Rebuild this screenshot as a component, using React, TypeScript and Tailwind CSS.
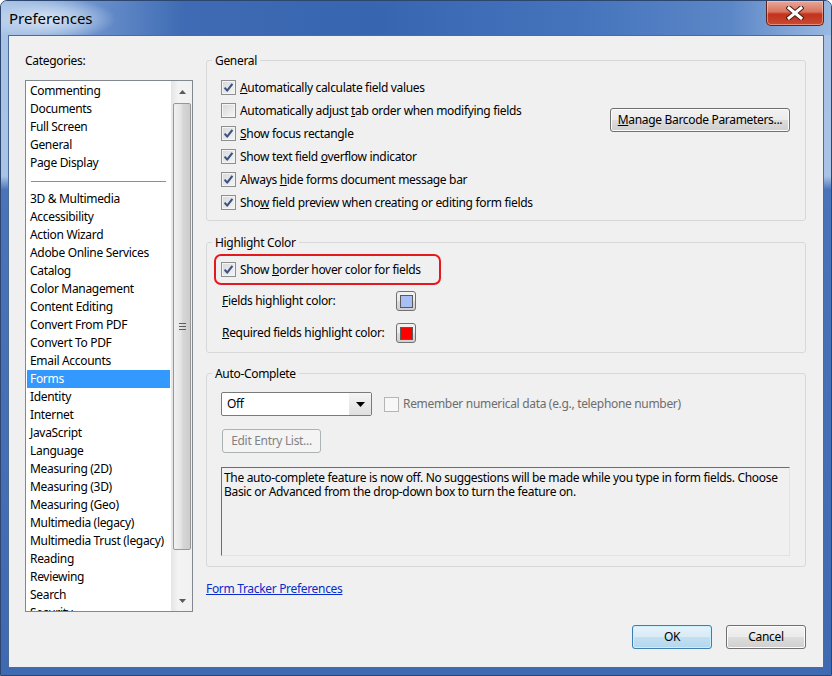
import React from "react";

const topCategories = ["Commenting", "Documents", "Full Screen", "General", "Page Display"];
const moreCategories = [
  "3D & Multimedia",
  "Accessibility",
  "Action Wizard",
  "Adobe Online Services",
  "Catalog",
  "Color Management",
  "Content Editing",
  "Convert From PDF",
  "Convert To PDF",
  "Email Accounts",
  "Forms",
  "Identity",
  "Internet",
  "JavaScript",
  "Language",
  "Measuring (2D)",
  "Measuring (3D)",
  "Measuring (Geo)",
  "Multimedia (legacy)",
  "Multimedia Trust (legacy)",
  "Reading",
  "Reviewing",
  "Search",
  "Security",
];

function Check({ checked, disabled }: { checked?: boolean; disabled?: boolean }) {
  return (
    <span
      className={
        disabled
          ? "flex h-[15px] w-[15px] shrink-0 items-center justify-center border border-[#b5b5b5] bg-[#f7f7f7]"
          : "flex h-[15px] w-[15px] shrink-0 items-center justify-center border border-[#8e8f8f] bg-[linear-gradient(135deg,#d6d7d9,#f6f6f6)] shadow-[inset_0_0_0_1px_#f4f4f4]"
      }
    >
      {checked && (
        <svg width="11" height="11" viewBox="0 0 11 11">
          <path d="M1.6 5.6 L4.2 8.6 L9.4 1.8" fill="none" stroke="#3b5283" strokeWidth="2.1" strokeLinejoin="round" />
        </svg>
      )}
    </span>
  );
}

function CheckRow({ checked, children }: { checked?: boolean; children: React.ReactNode }) {
  return (
    <div className="flex h-[23px] items-center gap-[4px]">
      <Check checked={checked} />
      <span className="whitespace-nowrap">{children}</span>
    </div>
  );
}

function Button({
  children,
  focused,
  disabled,
  className,
}: {
  children: React.ReactNode;
  focused?: boolean;
  disabled?: boolean;
  className?: string;
}) {
  const look = disabled
    ? "border-[#adb2b5] bg-[#f4f4f4] text-[#838383]"
    : focused
      ? "border-[#3c7fb1] bg-[linear-gradient(#e6f2fa_0%,#d8ebf7_50%,#c4e0f2_50%,#b3d6ee_100%)] shadow-[inset_0_0_0_1px_#c9f0fd]"
      : "border-[#707070] bg-[linear-gradient(#f2f2f2_0%,#ebebeb_50%,#dddddd_50%,#cfcfcf_100%)] shadow-[inset_0_0_0_1px_#fbfbfb]";
  return (
    <div className={`flex h-[24px] items-center justify-center rounded-[3px] border ${look} ${className ?? ""}`}>
      {children}
    </div>
  );
}

function Swatch({ color }: { color: string }) {
  return (
    <div className="flex h-[20px] w-[20px] items-center justify-center rounded-[3px] border border-[#707070] bg-[linear-gradient(#f2f2f2_0%,#ebebeb_50%,#dddddd_50%,#cfcfcf_100%)]">
      <div className="h-[13px] w-[13px] border border-[#5a5a5a]" style={{ backgroundColor: color }} />
    </div>
  );
}

function Group({ title, className, children }: { title: string; className?: string; children: React.ReactNode }) {
  return (
    <fieldset className={`w-[600px] rounded-[3px] border border-[#d8d8d8] ${className ?? ""}`}>
      <legend className="ml-[5px] px-[3px] leading-[15px]">{title}</legend>
      {children}
    </fieldset>
  );
}

function CategoryList() {
  return (
    <div className="mt-[11px] flex h-[532px] border border-[#828790] bg-white">
      <div className="w-[145px] overflow-hidden px-[1px] pt-[1px]">
        {topCategories.map((c) => (
          <div key={c} className="flex h-[18px] items-center whitespace-nowrap pl-[3px]">
            {c}
          </div>
        ))}
        <div className="flex h-[18px] items-center pl-[4px] pr-[3px]">
          <div className="h-px w-[135px] bg-[#4ea1d3]" />
        </div>
        {moreCategories.map((c) => (
          <div
            key={c}
            className={
              c === "Forms"
                ? "flex h-[18px] items-center whitespace-nowrap bg-[#3399ff] pl-[3px] text-white"
                : "flex h-[18px] items-center whitespace-nowrap pl-[3px]"
            }
          >
            {c}
          </div>
        ))}
      </div>
      {/* vertical scrollbar */}
      <div className="flex w-[21px] flex-col border-l border-[#e6e6e6] bg-[linear-gradient(90deg,#e6e6e6,#f3f3f3_30%,#f1f1f1)]">
        <div className="flex h-[21px] items-center justify-center">
          <svg width="7" height="4" viewBox="0 0 7 4">
            <path d="M0 4 L3.5 0 L7 4 Z" fill="#5a5a5a" />
          </svg>
        </div>
        <div className="flex-1 px-[1px] pt-[1px]">
          <div className="flex h-[447px] items-center justify-center rounded-[2px] border border-[#979797] bg-[linear-gradient(90deg,#f1f1f1,#e4e4e4_45%,#d6d6d6_55%,#cdcdcd)]">
            <div className="flex flex-col gap-[2px]">
              <div className="h-px w-[7px] bg-[#5e5e5e]" />
              <div className="h-px w-[7px] bg-[#5e5e5e]" />
              <div className="h-px w-[7px] bg-[#5e5e5e]" />
            </div>
          </div>
        </div>
        <div className="flex h-[21px] items-center justify-center">
          <svg width="7" height="4" viewBox="0 0 7 4">
            <path d="M0 0 L3.5 4 L7 0 Z" fill="#5a5a5a" />
          </svg>
        </div>
      </div>
    </div>
  );
}

export default function App() {
  return (
    <div className="h-[676px] w-[832px] overflow-hidden rounded-t-[7px] border border-[#2c4670] bg-[linear-gradient(180deg,#a8c2e6_0%,#a9c3e6_26%,#4a74b9_28%,#3f6ab2_100%)] font-['Noto_Sans',sans-serif] text-[12px] tracking-[-0.32px] text-black">
      {/* title bar */}
      <div className="flex h-[34px] items-start justify-between bg-[radial-gradient(ellipse_70px_22px_at_45px_18px,#dbe6f4_0%,rgba(200,218,240,0.6)_55%,rgba(200,218,240,0)_100%),linear-gradient(90deg,#a9c3e6_0%,#6f95cf_10%,#3e6bb3_22%,#3865b0_45%,#4574bd_70%,#5c87c7_88%,#9ab9e1_100%)]">
        <div className="pl-[8px] pt-[7px] text-[15px] leading-[20px] tracking-normal">Preferences</div>
        <div className="mr-[7px] flex h-[25px] w-[58px] items-center justify-center rounded-b-[5px] border border-t-0 border-[#5b231b] bg-[linear-gradient(#e7a899_0%,#d8745f_45%,#c2321c_55%,#c94a33_100%)] shadow-[inset_0_0_0_1px_rgba(255,210,200,0.5)]">
          <svg width="18" height="14" viewBox="0 0 18 14">
            <path d="M3 2 L15 12 M15 2 L3 12" stroke="#4a1a12" strokeWidth="5" strokeLinecap="square" />
            <path d="M3 2 L15 12 M15 2 L3 12" stroke="#ffffff" strokeWidth="3" strokeLinecap="square" />
          </svg>
        </div>
      </div>

      {/* client area */}
      <div className="ml-[7px] flex h-[633px] w-[816px] flex-col border border-[#4d6b99] bg-[#f0f0f0]">
        <div className="flex gap-[13px] pl-[16px] pt-[17px]">
          <div className="w-[168px]">
            <div className="leading-[16px]">Categories:</div>
            <CategoryList />
          </div>

          <div className="w-[600px]">
            <Group title="General">
              <div className="flex justify-between pb-[6px] pl-[14px] pr-[15px] pt-[8px]">
                <div>
                  <CheckRow checked>
                    <u>A</u>utomatically calculate field values
                  </CheckRow>
                  <CheckRow>
                    Automatically adjust <u>t</u>ab order when modifying fields
                  </CheckRow>
                  <CheckRow checked>
                    <u>S</u>how focus rectangle
                  </CheckRow>
                  <CheckRow checked>
                    Show text field <u>o</u>verflow indicator
                  </CheckRow>
                  <CheckRow checked>
                    Always <u>h</u>ide forms document message bar
                  </CheckRow>
                  <CheckRow checked>
                    Sho<u>w</u> field preview when creating or editing form fields
                  </CheckRow>
                </div>
                <div className="pt-[32px]">
                  <Button className="w-[180px]">
                    <span>
                      <u>M</u>anage Barcode Parameters...
                    </span>
                  </Button>
                </div>
              </div>
            </Group>

            <Group title="Highlight Color" className="mt-[14px]">
              <div className="pb-[9px] pl-[14px] pt-[4px]">
                <div className="-ml-[7px] flex h-[31px] w-[227px] items-center gap-[4px] rounded-[7px] border-2 border-[#e3191e] pl-[5px]">
                  <Check checked />
                  <span>
                    Show <u>b</u>order hover color for fields
                  </span>
                </div>
                <div className="mt-[6px] flex h-[20px] items-center">
                  <span className="ml-[1px] w-[174px]">
                    <u>F</u>ields highlight color:
                  </span>
                  <Swatch color="#a8bff6" />
                </div>
                <div className="mt-[12px] flex h-[20px] items-center">
                  <span className="ml-[1px] w-[174px]">
                    <u>R</u>equired fields highlight color:
                  </span>
                  <Swatch color="#ff0000" />
                </div>
              </div>
            </Group>

            <Group title="Auto-Complete" className="mt-[13px]">
              <div className="pb-[10px] pl-[14px] pt-[11px]">
                <div className="flex items-center">
                  <div className="flex h-[24px] w-[151px] items-stretch rounded-[2px] border border-[#7a7a7a] bg-white">
                    <div className="flex flex-1 items-center pl-[5px]">Off</div>
                    <div className="flex w-[22px] items-center justify-center bg-[linear-gradient(#f4f4f4,#e0e0e0)]">
                      <svg width="9" height="5" viewBox="0 0 9 5">
                        <path d="M0 0 L9 0 L4.5 5 Z" fill="#000" />
                      </svg>
                    </div>
                  </div>
                  <div className="ml-[12px] flex items-center gap-[4px] text-[#6d6d6d]">
                    <Check disabled />
                    <span>Remember numerical data (e.g., telephone number)</span>
                  </div>
                </div>
                <Button disabled className="ml-[1px] mt-[13px] w-[99px]">
                  Edit Entry List...
                </Button>
                <div className="mt-[14px] h-[89px] w-[569px] whitespace-nowrap border border-b-[#e3e3e3] border-l-[#6d6d6d] border-r-[#e3e3e3] border-t-[#6d6d6d] bg-[#f0f0f0] pl-[2px] pt-[3px] leading-[14px]">
                  The auto-complete feature is now off. No suggestions will be made while you type in form fields. Choose
                  <br />
                  Basic or Advanced from the drop-down box to turn the feature on.
                </div>
              </div>
            </Group>

            <div className="mt-[14px] leading-[15px] text-[#0a2ccb] underline">Form Tracker Preferences</div>
          </div>
        </div>

        <div className="mt-[13px] flex justify-end gap-[14px] pr-[17px]">
          <Button focused className="w-[80px]">
            OK
          </Button>
          <Button className="w-[80px]">Cancel</Button>
        </div>
      </div>
    </div>
  );
}
